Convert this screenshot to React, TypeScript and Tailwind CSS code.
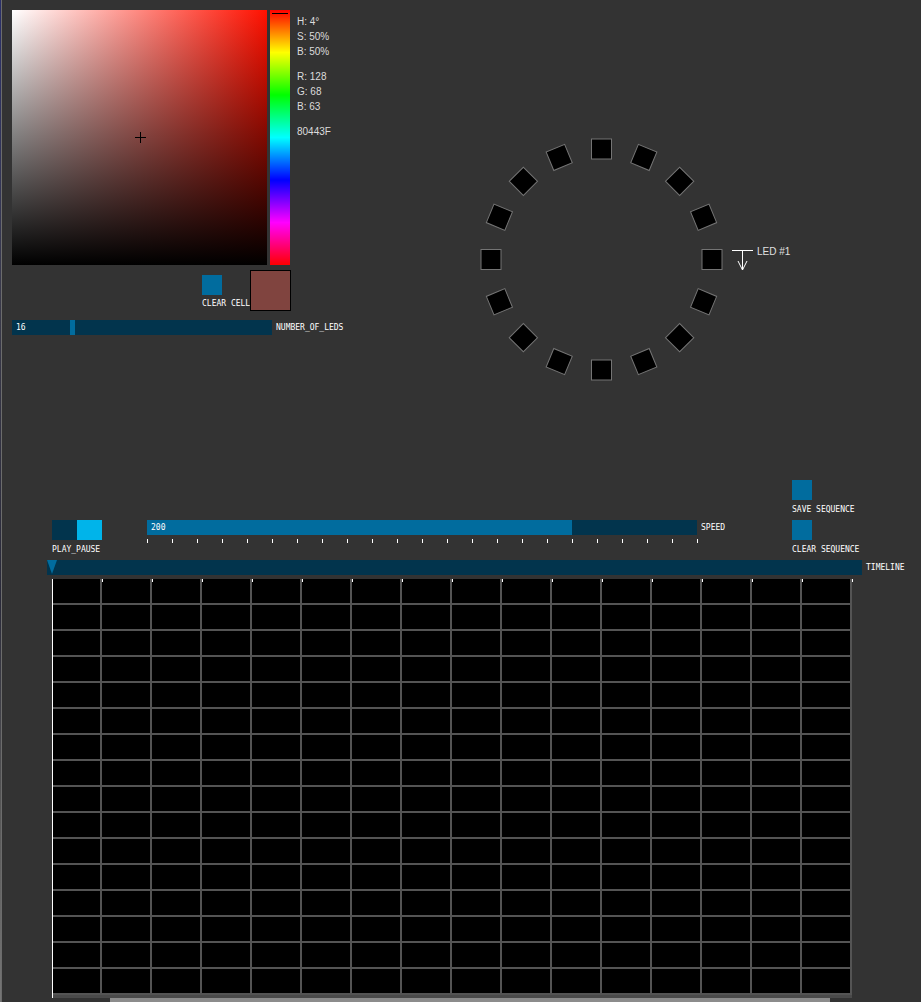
import React from 'react';

const info = [
  { t: 'H: 4°', gap: false },
  { t: 'S: 50%', gap: false },
  { t: 'B: 50%', gap: false },
  { t: 'R: 128', gap: true },
  { t: 'G: 68', gap: false },
  { t: 'B: 63', gap: false },
  { t: '80443F', gap: true },
];

const ROWS = 16;
const COLS = 16;
const LEDS = 16;

function Label({ children, className = '' }: { children: React.ReactNode; className?: string }) {
  return (
    <div className={`font-['DejaVu_Sans_Mono',monospace] text-[8px] leading-[8px] text-white whitespace-nowrap ${className}`}>
      {children}
    </div>
  );
}

function LedRing() {
  const cx = 131.5;
  const cy = 129.5;
  const r = 110.5;
  return (
    <svg width="330" height="260" className="mt-[120px] block">
      {Array.from({ length: LEDS }).map((_, i) => {
        const a = (i * 360) / LEDS;
        const rad = (a * Math.PI) / 180;
        const x = cx + r * Math.cos(rad);
        const y = cy + r * Math.sin(rad);
        return (
          <rect
            key={i}
            x={-10}
            y={-10}
            width={20}
            height={20}
            fill="#000"
            stroke="#747474"
            strokeWidth={1}
            transform={`translate(${x} ${y}) rotate(${a})`}
          />
        );
      })}
      <line x1="262" y1="120.5" x2="283" y2="120.5" stroke="#fff" strokeWidth="1" />
      <line x1="272.5" y1="120" x2="272.5" y2="140" stroke="#fff" strokeWidth="1" />
      <polyline points="268,131 272.5,140 277,131" fill="none" stroke="#fff" strokeWidth="1" />
      <text x="287" y="125" fill="#e0e0e0" fontSize="10" fontFamily="Liberation Sans, Arial, sans-serif">
        LED #1
      </text>
    </svg>
  );
}

export default function App() {
  return (
    <div className="relative w-[921px] h-[1002px] overflow-hidden bg-[#333333] font-['Liberation_Sans',Arial,sans-serif]">
      {/* window edge */}
      <div className="absolute left-0 top-0 bottom-0 w-[1px] bg-[linear-gradient(to_bottom,#2a2f6a,#3a3a4a_30%,#2a2a3a_60%,#555_80%,#777)]" />
      <div className="absolute left-[1px] top-0 bottom-0 w-[1px] bg-[#6c6c6c]" />

      {/* top: colour picker + led ring */}
      <div className="flex h-[470px] pt-[10px] pl-[12px]">
        <div className="w-[458px] shrink-0">
          <div className="flex">
            <div className="relative w-[255px] h-[255px] bg-[linear-gradient(to_right,#ffffff,#ff1100)]">
              <div className="absolute inset-0 bg-[linear-gradient(to_top,#000000,rgba(0,0,0,0))]" />
              <svg width="11" height="11" className="absolute left-[123px] top-[122px]">
                <line x1="0" y1="5.5" x2="11" y2="5.5" stroke="#000" strokeWidth="1" />
                <line x1="5.5" y1="0" x2="5.5" y2="11" stroke="#000" strokeWidth="1" />
              </svg>
            </div>
            <div className="relative ml-[3px] w-[20px] h-[255px] bg-[linear-gradient(to_bottom,#ff0000,#ffff00,#00ff00,#00ffff,#0000ff,#ff00ff,#ff0000)]">
              <div className="absolute left-[2px] right-[2px] top-[3px] h-px bg-black" />
            </div>
            <div className="ml-[7px] pt-[4px] text-[10px] leading-[15px] text-[#dcdcdc]">
              {info.map((l) => (
                <div key={l.t} className={l.gap ? 'mt-[10px]' : ''}>
                  {l.t}
                </div>
              ))}
            </div>
          </div>

          <div className="flex mt-[5px]">
            <div className="ml-[190px] w-[48px] pt-[5px]">
              <div className="w-[20px] h-[20px] bg-[#016c9e]" />
              <Label className="mt-[5px]">CLEAR CELL</Label>
            </div>
            <div className="w-[41px] h-[41px] border border-black bg-[#80443f]" />
          </div>

          <div className="flex items-center mt-[9px]">
            <div className="relative w-[260px] h-[15px] bg-[#02344d]">
              <div className="absolute left-[58px] top-0 w-[5px] h-full bg-[#016c9e]" />
              <Label className="absolute left-[4px] top-[4px]">16</Label>
            </div>
            <Label className="ml-[4px]">NUMBER_OF_LEDS</Label>
          </div>
        </div>
        <LedRing />
      </div>

      {/* controls */}
      <div className="flex h-[90px] pt-[10px]">
        <div className="w-[792px] shrink-0 pl-[52px] pt-[40px] flex items-start">
          <div>
            <div className="flex w-[50px] h-[20px]">
              <div className="w-[25px] h-full bg-[#02344d]" />
              <div className="w-[25px] h-full bg-[#00b4ea]" />
            </div>
            <Label className="mt-[6px]">PLAY_PAUSE</Label>
          </div>
          <div className="ml-[45px]">
            <div className="flex items-center">
              <div className="relative w-[550px] h-[15px] bg-[#02344d]">
                <div className="absolute left-0 top-0 h-full w-[425px] bg-[#016c9e]" />
                <Label className="absolute left-[4px] top-[4px]">200</Label>
              </div>
              <Label className="ml-[4px]">SPEED</Label>
            </div>
            <div className="flex justify-between w-[551px] h-[4px] mt-[4px]">
              {Array.from({ length: 23 }).map((_, i) => (
                <div key={i} className="w-px h-full bg-white" />
              ))}
            </div>
          </div>
        </div>
        <div>
          <div className="w-[20px] h-[20px] bg-[#016c9e]" />
          <Label className="mt-[6px]">SAVE SEQUENCE</Label>
          <div className="w-[20px] h-[20px] bg-[#016c9e] mt-[6px]" />
          <Label className="mt-[6px]">CLEAR SEQUENCE</Label>
        </div>
      </div>

      {/* timeline */}
      <div className="flex items-center ml-[47px]">
        <div className="relative w-[815px] h-[15px] bg-[#02344d]">
          <svg width="10" height="14" className="absolute left-0 top-0">
            <polygon points="0,0 10,0 5,14" fill="#016c9e" />
          </svg>
        </div>
        <Label className="ml-[4px]">TIMELINE</Label>
      </div>

      {/* sequence grid */}
      <div className="relative ml-[52px] mt-[4px] w-[800px]">
        <div className="grid grid-cols-[repeat(16,50px)]">
          {Array.from({ length: ROWS * COLS }).map((_, i) => (
            <div key={i} className="h-[26px] bg-black border-r-2 border-b-2 border-[#545454]" />
          ))}
        </div>
        <div className="absolute left-0 top-0 bottom-0 w-px bg-white" />
        {Array.from({ length: COLS }).map((_, i) => (
          <div key={i} className="absolute top-0 w-px h-[3px] bg-white" style={{ left: (i + 1) * 50 }} />
        ))}
        <div className="h-[3px] bg-[#4a4a4a]" />
      </div>
      <div className="ml-[110px] w-[720px] h-[4px] bg-[#8c8c8c]" />
    </div>
  );
}
